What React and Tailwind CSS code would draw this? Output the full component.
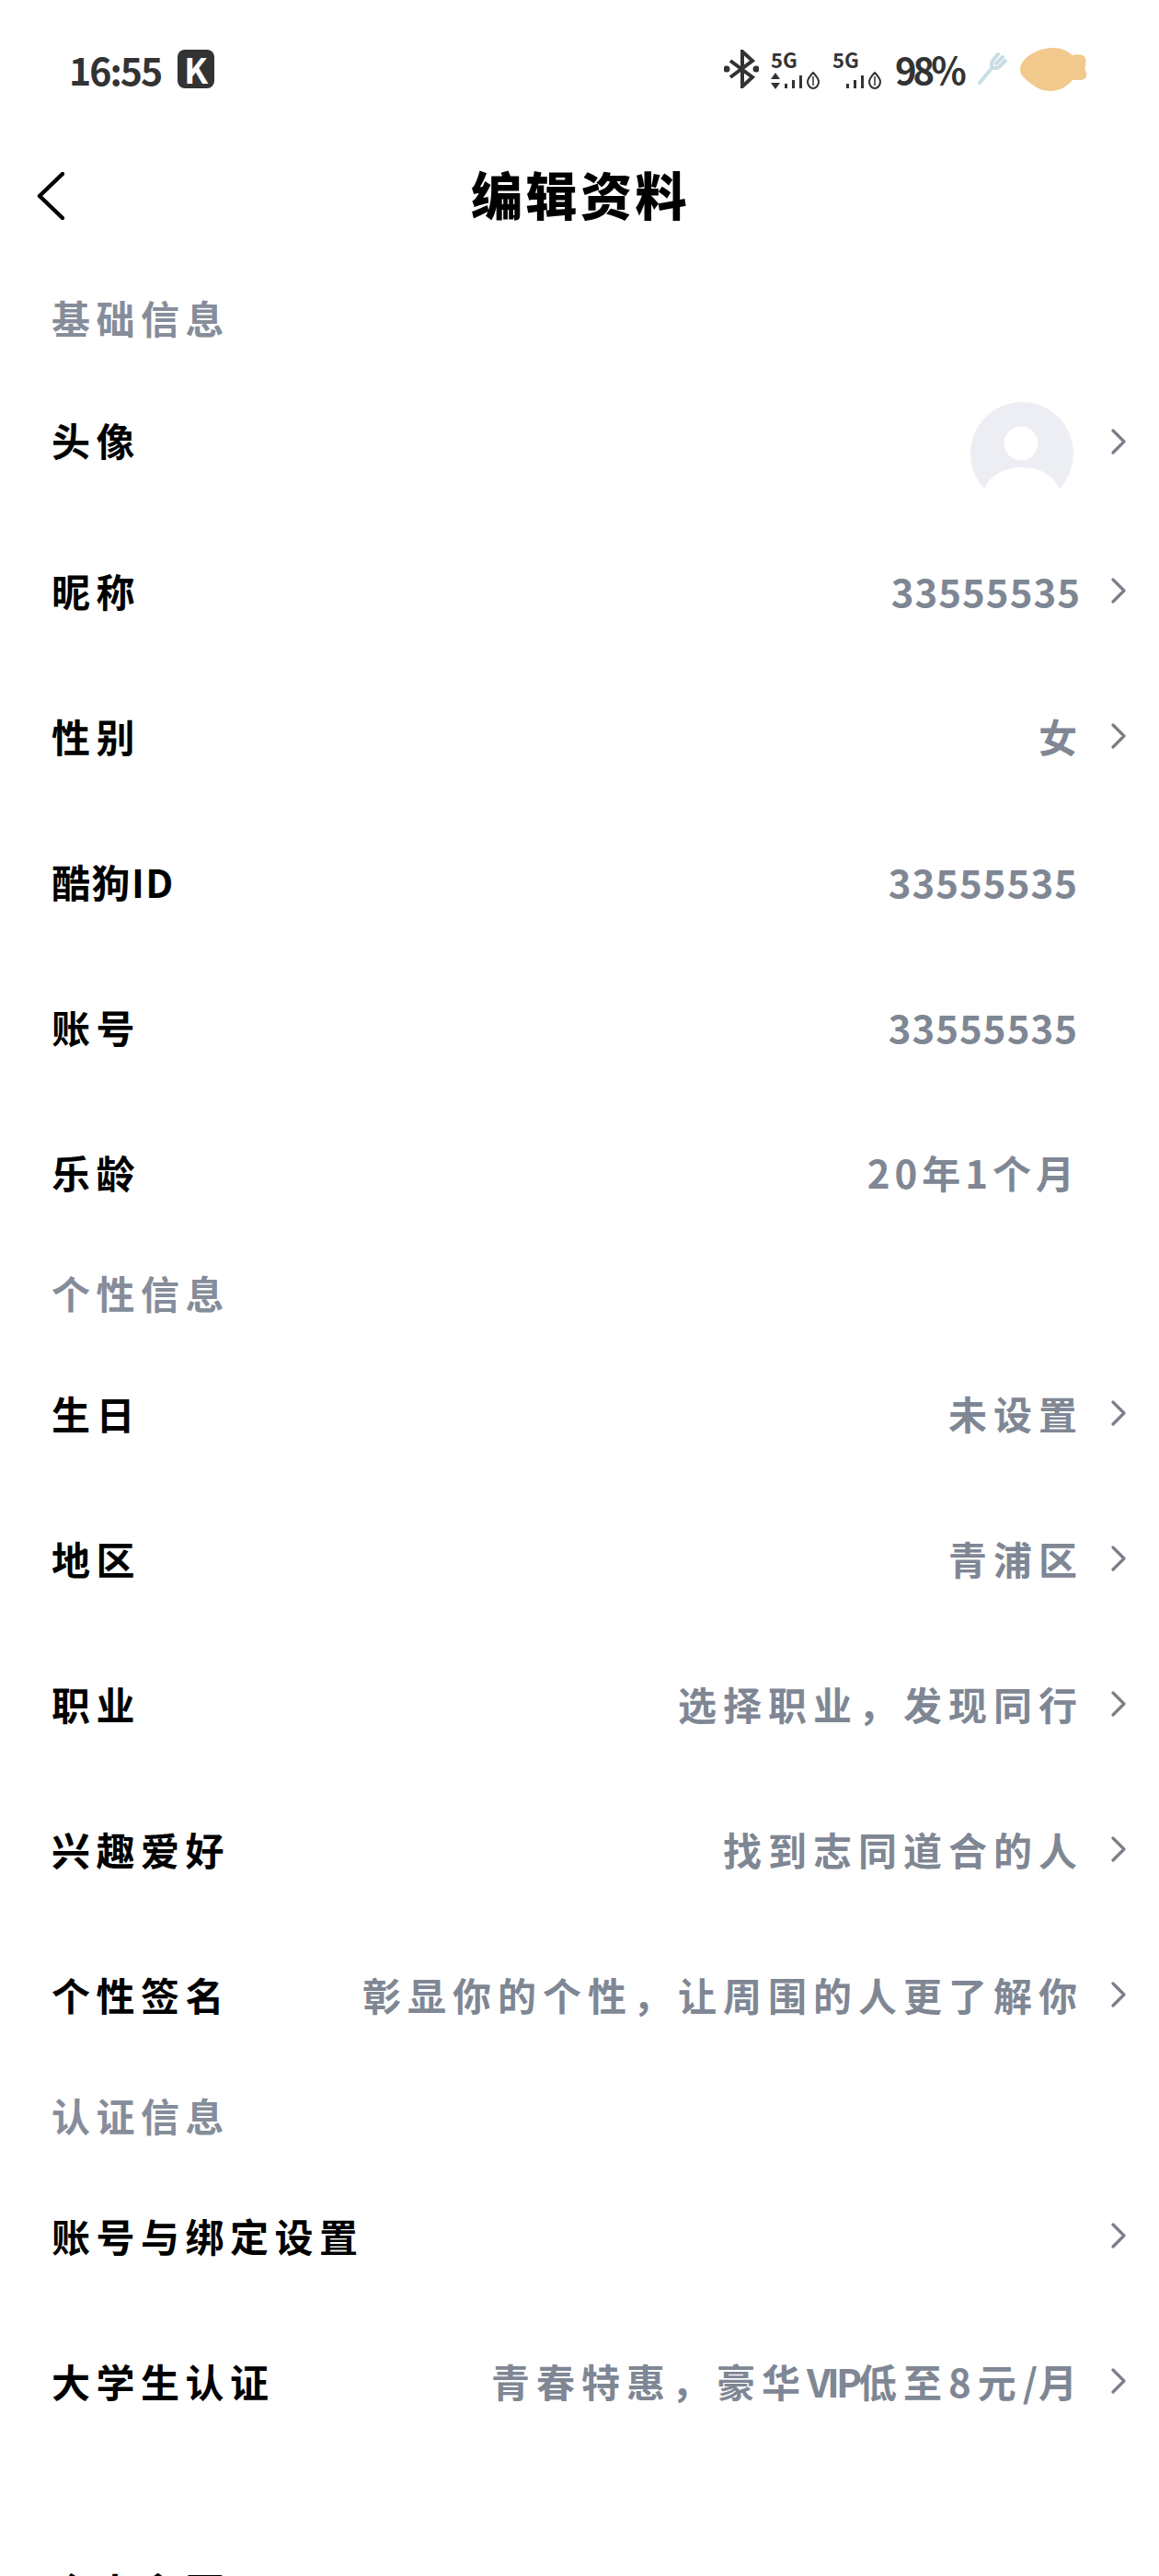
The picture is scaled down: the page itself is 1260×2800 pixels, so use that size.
const SECTIONS = [
  {
    title: '基础信息',
    rows: [
      { label: '头像', avatar: true, arrow: true },
      { label: '昵称', value: '33555535', digits: true, arrow: true },
      { label: '性别', value: '女', arrow: true },
      { label: '酷狗ID', value: '33555535', digits: true, tight: true },
      { label: '账号', value: '33555535', digits: true },
      { label: '乐龄', value: '20年1个月', age: true },
    ],
  },
  {
    title: '个性信息',
    rows: [
      { label: '生日', value: '未设置', arrow: true },
      { label: '地区', value: '青浦区', arrow: true },
      { label: '职业', value: '选择职业\uFF0C发现同行', arrow: true },
      { label: '兴趣爱好', value: '找到志同道合的人', arrow: true },
      { label: '个性签名', value: '彰显你的个性\uFF0C让周围的人更了解你', arrow: true },
    ],
  },
  {
    title: '认证信息',
    rows: [
      { label: '账号与绑定设置', arrow: true },
      {
        label: '大学生认证',
        arrow: true,
        value: (
          <>
            青春特惠{'\uFF0C'}豪华<span className="tracking-[-4px]">VIP</span>低至8元<span className="tracking-[1px]">/</span>月
          </>
        ),
      },
    ],
  },
];

function SignalGroup({ arrows }) {
  return (
    <div className="flex w-[53px] flex-col">
      <span className="h-[24px] text-[22px] leading-[24px] font-bold text-[#333333]">5G</span>
      <svg width="53" height="20" viewBox="0 0 53 20" className="mt-[2px]" fill="#333333">
        {arrows && <path d="M5 1l5 7H0zM5 19l5-7H0z" />}
        <rect x="15" y="13" width="3" height="5" />
        <rect x="23" y="9" width="3" height="9" />
        <rect x="31" y="4" width="3" height="14" />
        <path d="M46 1c4 4 6 7 6 10 0 4-3 7-6 7s-6-3-6-7c0-3 2-6 6-10z" fill="none" stroke="#333333" strokeWidth="2" />
        <path d="M46 5v10" stroke="#333333" strokeWidth="1.5" />
      </svg>
    </div>
  );
}

function StatusBar() {
  return (
    <div className="flex h-[150px] items-center justify-between pr-[78px] pl-[75px] text-[#333333]">
      <div className="flex items-center gap-[18px]">
        <span className="w-[100px] text-[41px] leading-none font-semibold tracking-[-2px]">16:55</span>
        <span className="flex h-[42px] w-[40px] items-center justify-center rounded-[8px] bg-[#333333] text-[38px] leading-none font-bold text-white">K</span>
      </div>
      <div className="flex items-center">
        <svg width="38" height="42" viewBox="0 0 38 42" fill="none" stroke="#333333" strokeWidth="4">
          <path d="M7 12l24 18-11 10V2l11 10L7 30" />
          <circle cx="3" cy="21" r="1.5" fill="#333333" />
          <circle cx="35" cy="21" r="1.5" fill="#333333" />
        </svg>
        <div className="ml-[13px]"><SignalGroup arrows /></div>
        <div className="ml-[14px]"><SignalGroup /></div>
        <span className="ml-[15px] w-[75px] text-[40px] leading-none font-bold tracking-[-4px]">98%</span>
        <svg width="33" height="36" viewBox="0 0 33 36" fill="none" stroke="#c8dde4" strokeWidth="4" className="ml-[14px]" strokeLinecap="round">
          <path d="M3 33L17 16M17 16c2 2 6 1 8-1l6-6M17 16c-2-3-1-6 1-8l5-6M21 12l7-7" />
        </svg>
        <svg width="74" height="47" viewBox="0 0 74 47" fill="#f2c98d" className="ml-[13px]">
          <path d="M1 24C1 17 6 11 13 7 21 2 29 0 37 0c9 0 15 3 21 8 3-1 7-1 11 0 4 2 4 7 3 11-1 3 0 5 1 8 1 5-1 7-5 8-4 0-7 0-10 0-6 7-14 12-24 12-8 0-15-3-21-8C7 34 1 30 1 24z" />
        </svg>
      </div>
    </div>
  );
}

function Avatar() {
  return (
    <svg width="112" height="100" viewBox="0 0 112 100">
      <circle cx="56" cy="56" r="56" fill="#eceef3" />
      <circle cx="55" cy="45" r="18.5" fill="#ffffff" />
      <ellipse cx="56" cy="102" rx="42" ry="31" fill="#ffffff" />
      <rect x="0" y="95" width="112" height="5" fill="#ffffff" />
    </svg>
  );
}

function Chevron() {
  return (
    <svg width="16" height="28" viewBox="0 0 16 28" fill="none" stroke="#7a7f88" strokeWidth="3.2" strokeLinecap="round" strokeLinejoin="round">
      <path d="M2 2l12 12L2 26" />
    </svg>
  );
}

function Row({ row }) {
  // rows without an arrow sit a little further left in the reference
  const valueMargin = row.arrow ? (row.digits ? 'mr-[1px]' : '-mr-[2px]') : row.age ? 'mr-[3px]' : 'mr-[4px]';
  return (
    <div className={`flex items-center pr-[36px] pl-[56px] ${row.avatar ? 'h-[166px]' : 'h-[158px]'}`}>
      <span className={`text-[42px] leading-none font-bold text-black ${row.avatar ? 'pb-[4px]' : ''} ${row.tight ? 'tracking-[1.5px]' : 'tracking-[6.5px]'}`}>{row.label}</span>
      <div className="ml-auto flex items-center">
        {row.avatar && <div className="mt-[14px] mr-[9px] h-[100px]"><Avatar /></div>}
        {row.value && (
          <span className={`text-[42px] leading-none font-semibold text-[#7f8794] ${valueMargin} ${row.digits ? 'tracking-[1px]' : row.age ? 'tracking-[5px]' : 'tracking-[7px]'}`}>{row.value}</span>
        )}
        <div className="flex w-[48px] justify-end">
          {row.arrow && <Chevron />}
        </div>
      </div>
    </div>
  );
}

export default function App() {
  return (
    <div className="h-[2800px] w-[1260px] overflow-hidden bg-white font-['Noto_Sans_CJK_SC','Noto_Sans',sans-serif]">
      <StatusBar />
      <div className="mb-[17px] grid h-[126px] grid-cols-[1fr_auto_1fr] items-center">
        <svg width="30" height="52" viewBox="0 0 30 52" fill="none" stroke="#000000" strokeWidth="4.5" strokeLinecap="round" strokeLinejoin="round" className="ml-[40px]">
          <path d="M28 2L3 26l25 24" />
        </svg>
        <span className="pb-[6px] pl-[2px] text-[56px] leading-none font-black tracking-[3.5px] text-black">编辑资料</span>
      </div>
      {SECTIONS.map((section) => (
        <div key={section.title}>
          <div className="flex h-[104px] items-center pb-[2px] pl-[56px] text-[42px] font-semibold tracking-[6.5px] text-[#868d9a]">{section.title}</div>
          {section.rows.map((row) => <Row key={row.label} row={row} />)}
        </div>
      ))}
      {/* only the top of this row shows at the bottom edge */}
      <div className="mt-[69px]"><Row row={{ label: '个人主页' }} /></div>
    </div>
  );
}
